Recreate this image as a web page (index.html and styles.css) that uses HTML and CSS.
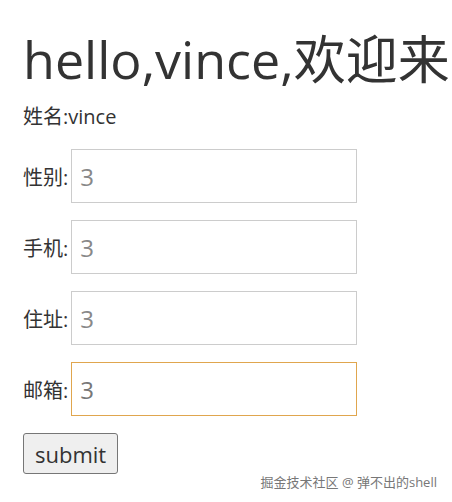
FILE: index.html
```html
<!DOCTYPE html>
<html lang="zh">
<head>
    <meta charset="UTF-8">
    <meta name="viewport" content="width=device-width, initial-scale=1.0">
    <title>hello</title>
    <link rel="stylesheet" href="styles.css">
</head>
<body>
    <h1 class="title">hello,vince,欢迎来</h1>
    <p class="name">姓名:vince</p>
    <form class="info-form">
        <div class="form-row">
            <label>性别:</label><input type="text" placeholder="3">
        </div>
        <div class="form-row">
            <label>手机:</label><input type="text" placeholder="3">
        </div>
        <div class="form-row">
            <label>住址:</label><input type="text" placeholder="3">
        </div>
        <div class="form-row">
            <label>邮箱:</label><input type="text" class="focused" value="3" autofocus>
        </div>
        <button type="button" class="submit-button">submit</button>
    </form>
    <div class="watermark">掘金技术社区 @ 弹不出的shell</div>
</body>
</html>
```

FILE: styles.css
```css
body {
    font-family: "Open Sans", "Noto Sans CJK SC", sans-serif;
    color: #333;
    margin: 0;
    padding: 0 23px;
    overflow: hidden;
    white-space: nowrap;
}

.title {
    font-size: 52px;
    font-weight: normal;
    margin: 24px 0 0;
    line-height: 70px;
}

.name {
    font-size: 20px;
    margin: 8px 0 17px;
    line-height: 30px;
}

.form-row {
    display: flex;
    align-items: center;
    margin-bottom: 17px;
}

.form-row label {
    font-size: 20px;
    margin-right: 3px;
}

.form-row input {
    width: 286px;
    height: 54px;
    box-sizing: border-box;
    border: 1px solid #ccc;
    padding: 0 8px;
    font-family: "Open Sans", sans-serif;
    font-size: 24px;
    color: #777;
    caret-color: #333;
    outline: none;
}

.form-row input::placeholder {
    color: #888;
}

.form-row input.focused {
    border-color: #e0a64e;
}

.submit-button {
    font-family: "Open Sans", sans-serif;
    font-size: 22px;
    color: #333;
    padding: 5px 11px 4px;
    background: #efefef;
    border: 1px solid #767676;
    border-radius: 3px;
}

.watermark {
    position: absolute;
    right: 15px;
    bottom: 11px;
    font-size: 13px;
    color: #777;
    text-shadow: 0 0 2px #fff;
}
```
